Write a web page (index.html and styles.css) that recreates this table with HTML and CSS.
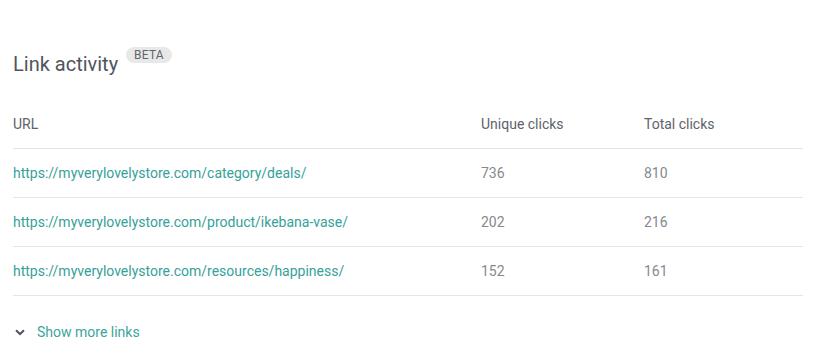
FILE: index.html
```html
<!DOCTYPE html>
<html>
<head>
<meta charset="utf-8">
<link rel="stylesheet" href="styles.css">
</head>
<body>
<section class="panel">
  <h2 class="title">Link activity <span class="badge">BETA</span></h2>
  <div class="table">
    <div class="row head">
      <div class="c-url">URL</div>
      <div class="c-num">Unique clicks</div>
      <div class="c-num">Total clicks</div>
    </div>
    <div class="row">
      <div class="c-url"><a href="#">https://myverylovelystore.com/category/deals/</a></div>
      <div class="c-num">736</div>
      <div class="c-num">810</div>
    </div>
    <div class="row">
      <div class="c-url"><a href="#">https://myverylovelystore.com/product/ikebana-vase/</a></div>
      <div class="c-num">202</div>
      <div class="c-num">216</div>
    </div>
    <div class="row">
      <div class="c-url"><a href="#">https://myverylovelystore.com/resources/happiness/</a></div>
      <div class="c-num">152</div>
      <div class="c-num">161</div>
    </div>
  </div>
  <a class="more" href="#">
    <svg class="chev" width="10" height="7" viewBox="0 0 10 7"><path d="M1 1.2 L5 5 L9 1.2" fill="none" stroke="#4f5661" stroke-width="2"/></svg>
    <span>Show more links</span>
  </a>
</section>
</body>
</html>
```
FILE: styles.css
```css
html, body { margin: 0; padding: 0; background: #fff; }
body { font-family: Roboto, "Noto Sans", sans-serif; }
.panel { padding: 50px 11px 0 13px; }
.title {
  margin: 0;
  font-size: 20px;
  font-weight: 400;
  color: #50555d;
  display: flex;
  align-items: flex-start;
  gap: 8px;
  line-height: 28px;
}
.badge {
  display: inline-block;
  margin-top: -3px;
  background: #e8e8e8;
  color: #60646b;
  font-size: 12px;
  line-height: 16px;
  height: 16px;
  padding: 0 8px;
  border-radius: 8px;
  letter-spacing: 0.2px;
}
.table { margin-top: 22px; }
.row {
  display: grid;
  grid-template-columns: 468px 163px 1fr;
  height: 48px;
  align-items: center;
  border-bottom: 1px solid #e5e5e5;
  font-size: 14px;
  color: #86898e;
}
.row.head { color: #5e636a; }
.row a { color: #36a198; text-decoration: none; }
.more {
  display: flex;
  align-items: center;
  gap: 12px;
  margin-top: 28px;
  padding-left: 2px;
  color: #3ca59c;
  text-decoration: none;
  font-size: 14px;
}
```
